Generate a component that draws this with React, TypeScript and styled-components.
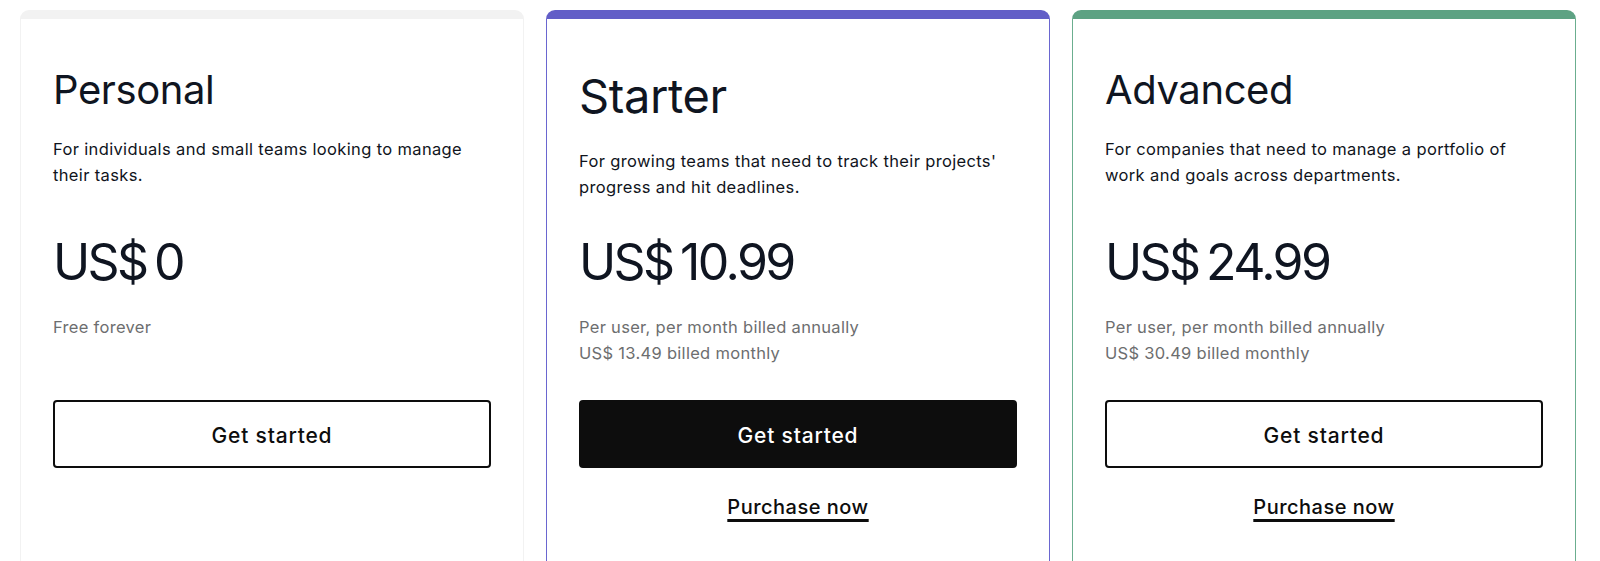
import React from "react";
import styled, { createGlobalStyle } from "styled-components";

const GlobalStyle = createGlobalStyle`
  html, body {
    margin: 0;
    padding: 0;
    background: #ffffff;
    overflow: hidden;
  }
  body {
    font-family: Inter, "Noto Sans", "Liberation Sans", sans-serif;
    color: #0f1521;
    -webkit-font-smoothing: antialiased;
  }
`;

const Page = styled.div`
  width: 1600px;
  height: 561px;
  overflow: hidden;
  box-sizing: border-box;
  padding: 10px 24px 0 20px;
  display: grid;
  grid-template-columns: repeat(3, 1fr);
  column-gap: 22px;
  align-items: start;
`;

const Card = styled.section<{ $accent: string; $edge: string }>`
  box-sizing: border-box;
  height: 620px;
  border: 1px solid ${(p) => p.$edge};
  border-top: 9px solid ${(p) => p.$accent};
  border-radius: 9px 9px 0 0;
  background: #fff;
  padding: 47px 32px 0 32px;
  display: flex;
  flex-direction: column;
`;

const Header = styled.div`
  min-height: 165px;
  display: flex;
  flex-direction: column;
`;

const Title = styled.h2<{ $large: boolean }>`
  margin: 0;
  font-weight: 400;
  font-size: ${(p) => (p.$large ? "47px" : "40px")};
  line-height: ${(p) => (p.$large ? "60px" : "48px")};
  letter-spacing: -0.4px;
  color: #0f1521;
`;

const Description = styled.p`
  margin: 22px 0 0 0;
  font-size: 16.5px;
  line-height: 26px;
  letter-spacing: 0.35px;
  color: #10141c;
  max-width: 429px;
`;

const Price = styled.div`
  font-size: 50px;
  line-height: 62px;
  font-weight: 400;
  letter-spacing: -2.6px;
  word-spacing: -4px;
  color: #0f1521;
`;

const Notes = styled.div`
  margin-top: 21px;
  min-height: 52px;
  font-size: 16.5px;
  line-height: 26px;
  letter-spacing: 0.3px;
  color: #6d6e6f;
`;

const NoteLine = styled.div``;

const Button = styled.button<{ $primary: boolean }>`
  margin-top: 34px;
  box-sizing: border-box;
  width: 100%;
  height: 68px;
  padding: 3px 0 0 0;
  border-radius: 4px;
  border: 2px solid #0d0d0d;
  background: ${(p) => (p.$primary ? "#0d0d0d" : "#ffffff")};
  color: ${(p) => (p.$primary ? "#ffffff" : "#0d0d0d")};
  font-family: inherit;
  font-size: 21px;
  font-weight: 500;
  letter-spacing: 0.8px;
  cursor: pointer;
`;

const Purchase = styled.a`
  align-self: center;
  margin-top: 25px;
  font-size: 20px;
  line-height: 28px;
  font-weight: 500;
  letter-spacing: 0.5px;
  color: #0d0d0d;
  text-decoration: underline;
  text-decoration-thickness: 2.5px;
  text-underline-offset: 5px;
  cursor: pointer;
`;

type Plan = {
  name: string;
  desc: string;
  price: string;
  notes: string[];
  accent: string;
  edge: string;
  primary: boolean;
  purchase: boolean;
  large: boolean;
};

const plans: Plan[] = [
  {
    name: "Personal",
    desc: "For individuals and small teams looking to manage their tasks.",
    price: "US$ 0",
    notes: ["Free forever"],
    accent: "#f2f2f2",
    edge: "#f2f2f2",
    primary: false,
    purchase: false,
    large: false,
  },
  {
    name: "Starter",
    desc: "For growing teams that need to track their projects' progress and hit deadlines.",
    price: "US$ 10.99",
    notes: ["Per user, per month billed annually", "US$ 13.49 billed monthly"],
    accent: "#625ec7",
    edge: "#6a66d0",
    primary: true,
    purchase: true,
    large: true,
  },
  {
    name: "Advanced",
    desc: "For companies that need to manage a portfolio of work and goals across departments.",
    price: "US$ 24.99",
    notes: ["Per user, per month billed annually", "US$ 30.49 billed monthly"],
    accent: "#5da283",
    edge: "#6bae8f",
    primary: false,
    purchase: true,
    large: false,
  },
];

export default function App() {
  return (
    <>
      <GlobalStyle />
      <Page>
        {plans.map((p) => (
          <Card key={p.name} $accent={p.accent} $edge={p.edge}>
            <Header>
              <Title $large={p.large}>{p.name}</Title>
              <Description>{p.desc}</Description>
            </Header>
            <Price>{p.price}</Price>
            <Notes>
              {p.notes.map((n) => (
                <NoteLine key={n}>{n}</NoteLine>
              ))}
            </Notes>
            <Button $primary={p.primary}>Get started</Button>
            {p.purchase && <Purchase>Purchase now</Purchase>}
          </Card>
        ))}
      </Page>
    </>
  );
}
